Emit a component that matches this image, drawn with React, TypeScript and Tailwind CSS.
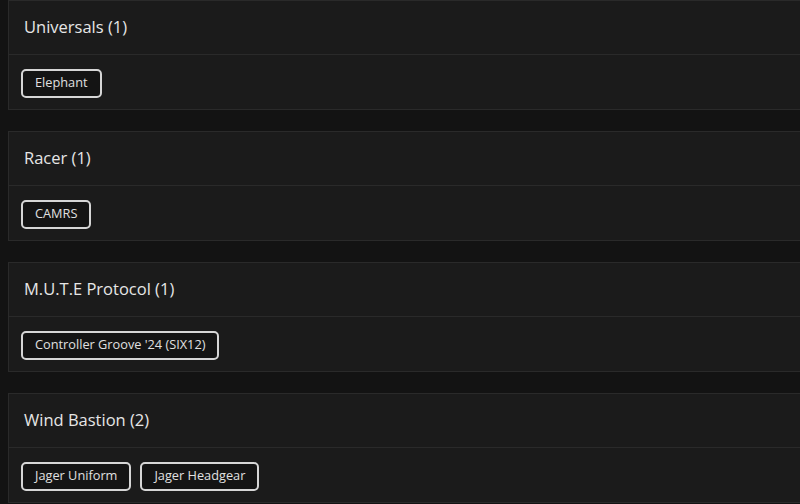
import React from "react"

const sections = [
  { name: "Universals", items: ["Elephant"] },
  { name: "Racer", items: ["CAMRS"] },
  { name: "M.U.T.E Protocol", items: ["Controller Groove '24 (SIX12)"] },
  { name: "Wind Bastion", items: ["Jager Uniform", "Jager Headgear"] },
]

export default function App() {
  return (
    <div
      className="w-[800px] h-[504px] overflow-hidden bg-[#131313] pl-2 flex flex-col gap-[21px]"
      style={{ fontFamily: '"Open Sans", "Noto Sans", sans-serif' }}
    >
      {sections.map((s) => (
        <div key={s.name} className="w-[800px] shrink-0 border border-[#2a2a2a] bg-[#1b1b1b]">
          <div className="h-[54px] flex items-center pl-[15px] border-b border-[#2a2a2a]">
            <span className="text-[16.5px] font-medium text-[#e6e6e6]">
              {s.name} ({s.items.length})
            </span>
          </div>
          <div className="h-[54px] flex items-center gap-[9px] pl-3 pt-[2px]">
            {s.items.map((it) => (
              <span
                key={it}
                className="h-[29px] flex items-center px-3 border-2 border-[#d6d6d6] rounded-[5px] bg-[#141414] text-[12.75px] text-[#e0e0e0]"
              >
                {it}
              </span>
            ))}
          </div>
        </div>
      ))}
    </div>
  )
}
